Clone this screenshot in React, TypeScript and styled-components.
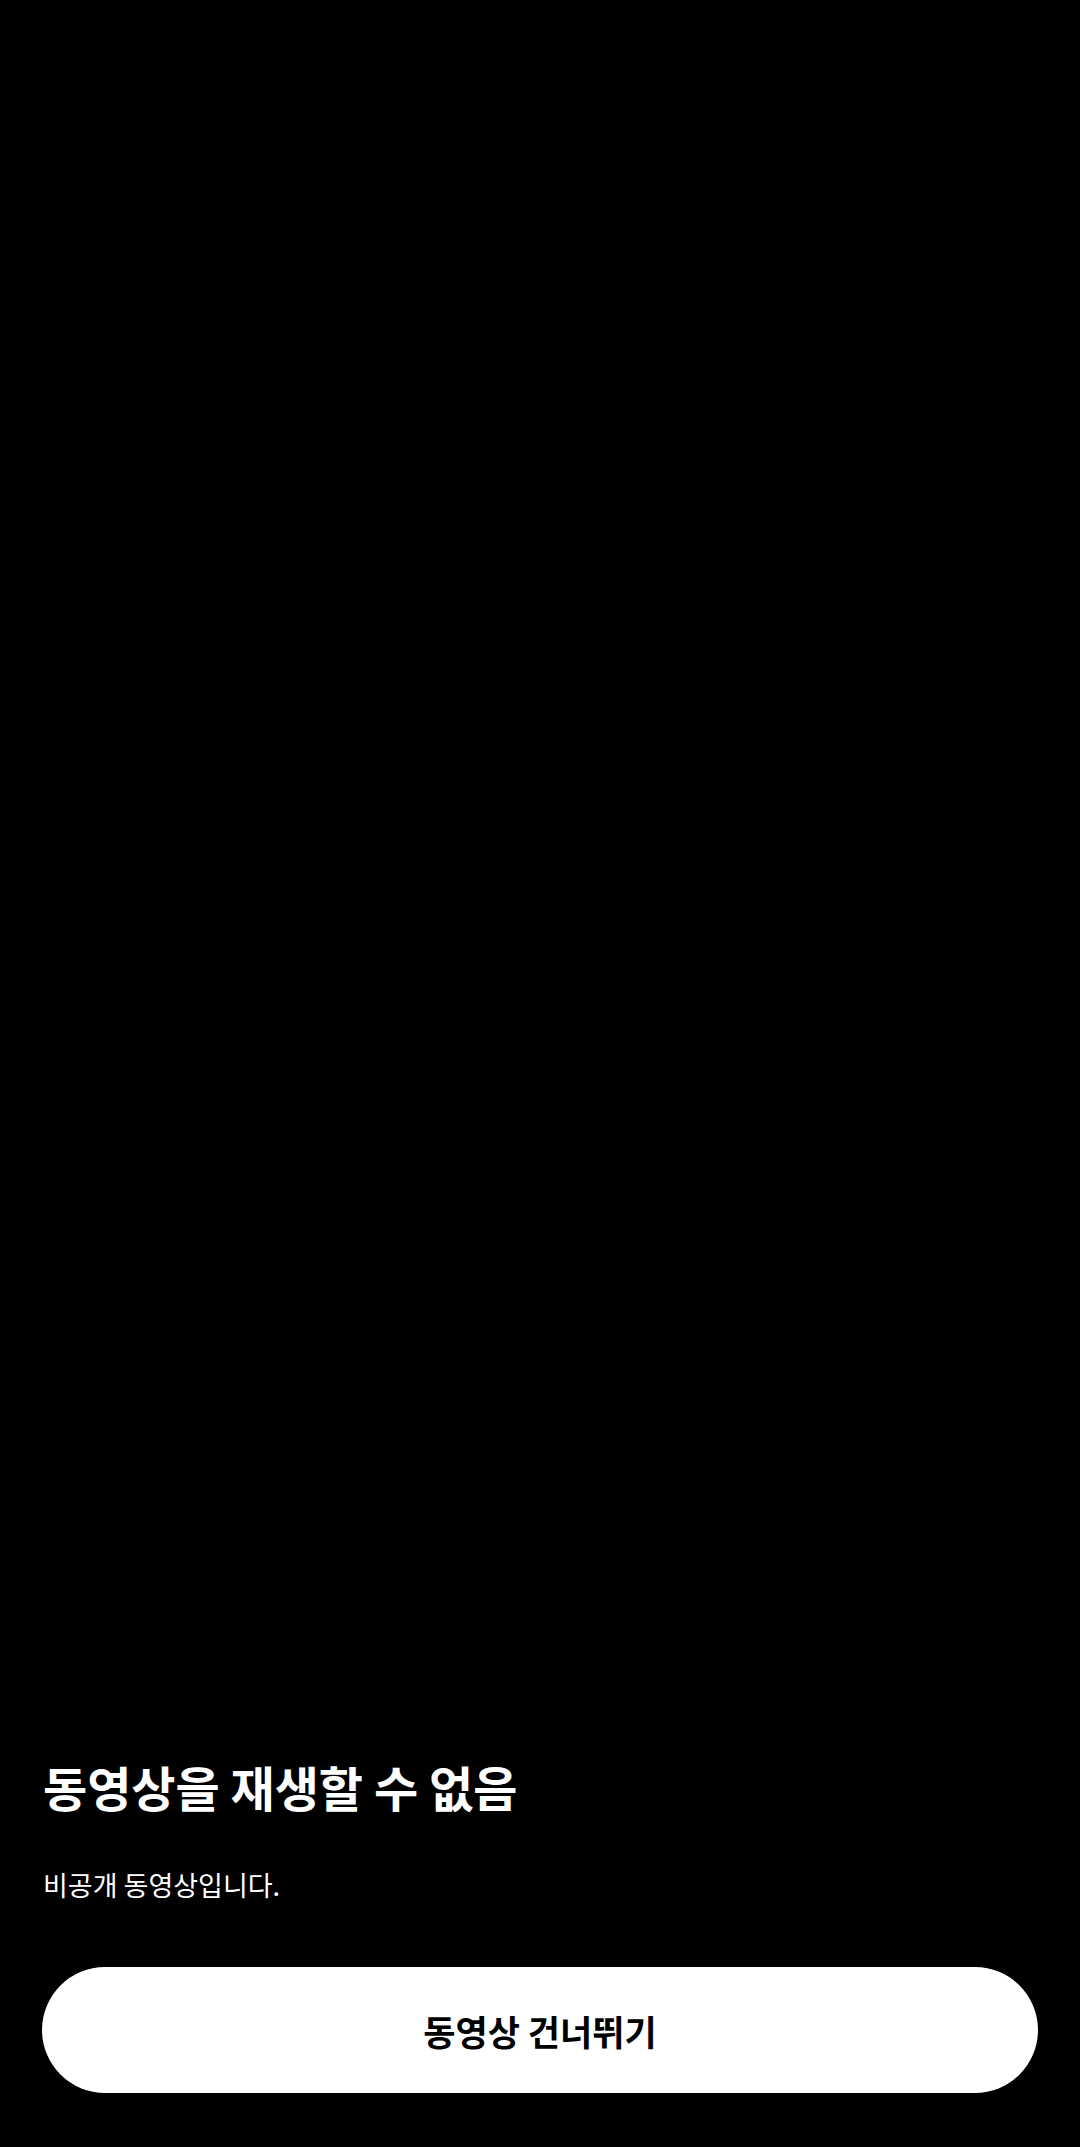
import React from 'react';
import styled, { createGlobalStyle } from 'styled-components';

const GlobalStyle = createGlobalStyle`
  html, body {
    margin: 0;
    padding: 0;
    background: #000000;
  }
  body {
    font-family: "Noto Sans CJK KR", "Noto Sans", sans-serif;
  }
`;

const Screen = styled.div`
  width: 1080px;
  height: 2147px;
  background: #000000;
  display: flex;
  flex-direction: column;
  justify-content: flex-end;
  padding: 0 42px 54px;
  box-sizing: border-box;
`;

const Title = styled.h1`
  margin: 0 0 50px 1px;
  font-size: 48px;
  line-height: 62px;
  font-weight: 700;
  color: #ffffff;
`;

const Message = styled.p`
  margin: 0 0 64px 1px;
  font-size: 27px;
  line-height: 36px;
  font-weight: 400;
  color: #ffffff;
`;

const SkipButton = styled.button`
  height: 126px;
  width: 100%;
  border: none;
  border-radius: 63px;
  background: #ffffff;
  color: #000000;
  font-family: "Noto Sans CJK KR", "Noto Sans", sans-serif;
  font-size: 35px;
  font-weight: 700;
  display: flex;
  align-items: center;
  justify-content: center;
  cursor: pointer;
`;

function App() {
  return (
    <>
      <GlobalStyle />
      <Screen>
        <Title>동영상을 재생할 수 없음</Title>
        <Message>비공개 동영상입니다.</Message>
        <SkipButton>동영상 건너뛰기</SkipButton>
      </Screen>
    </>
  );
}

export default App;
